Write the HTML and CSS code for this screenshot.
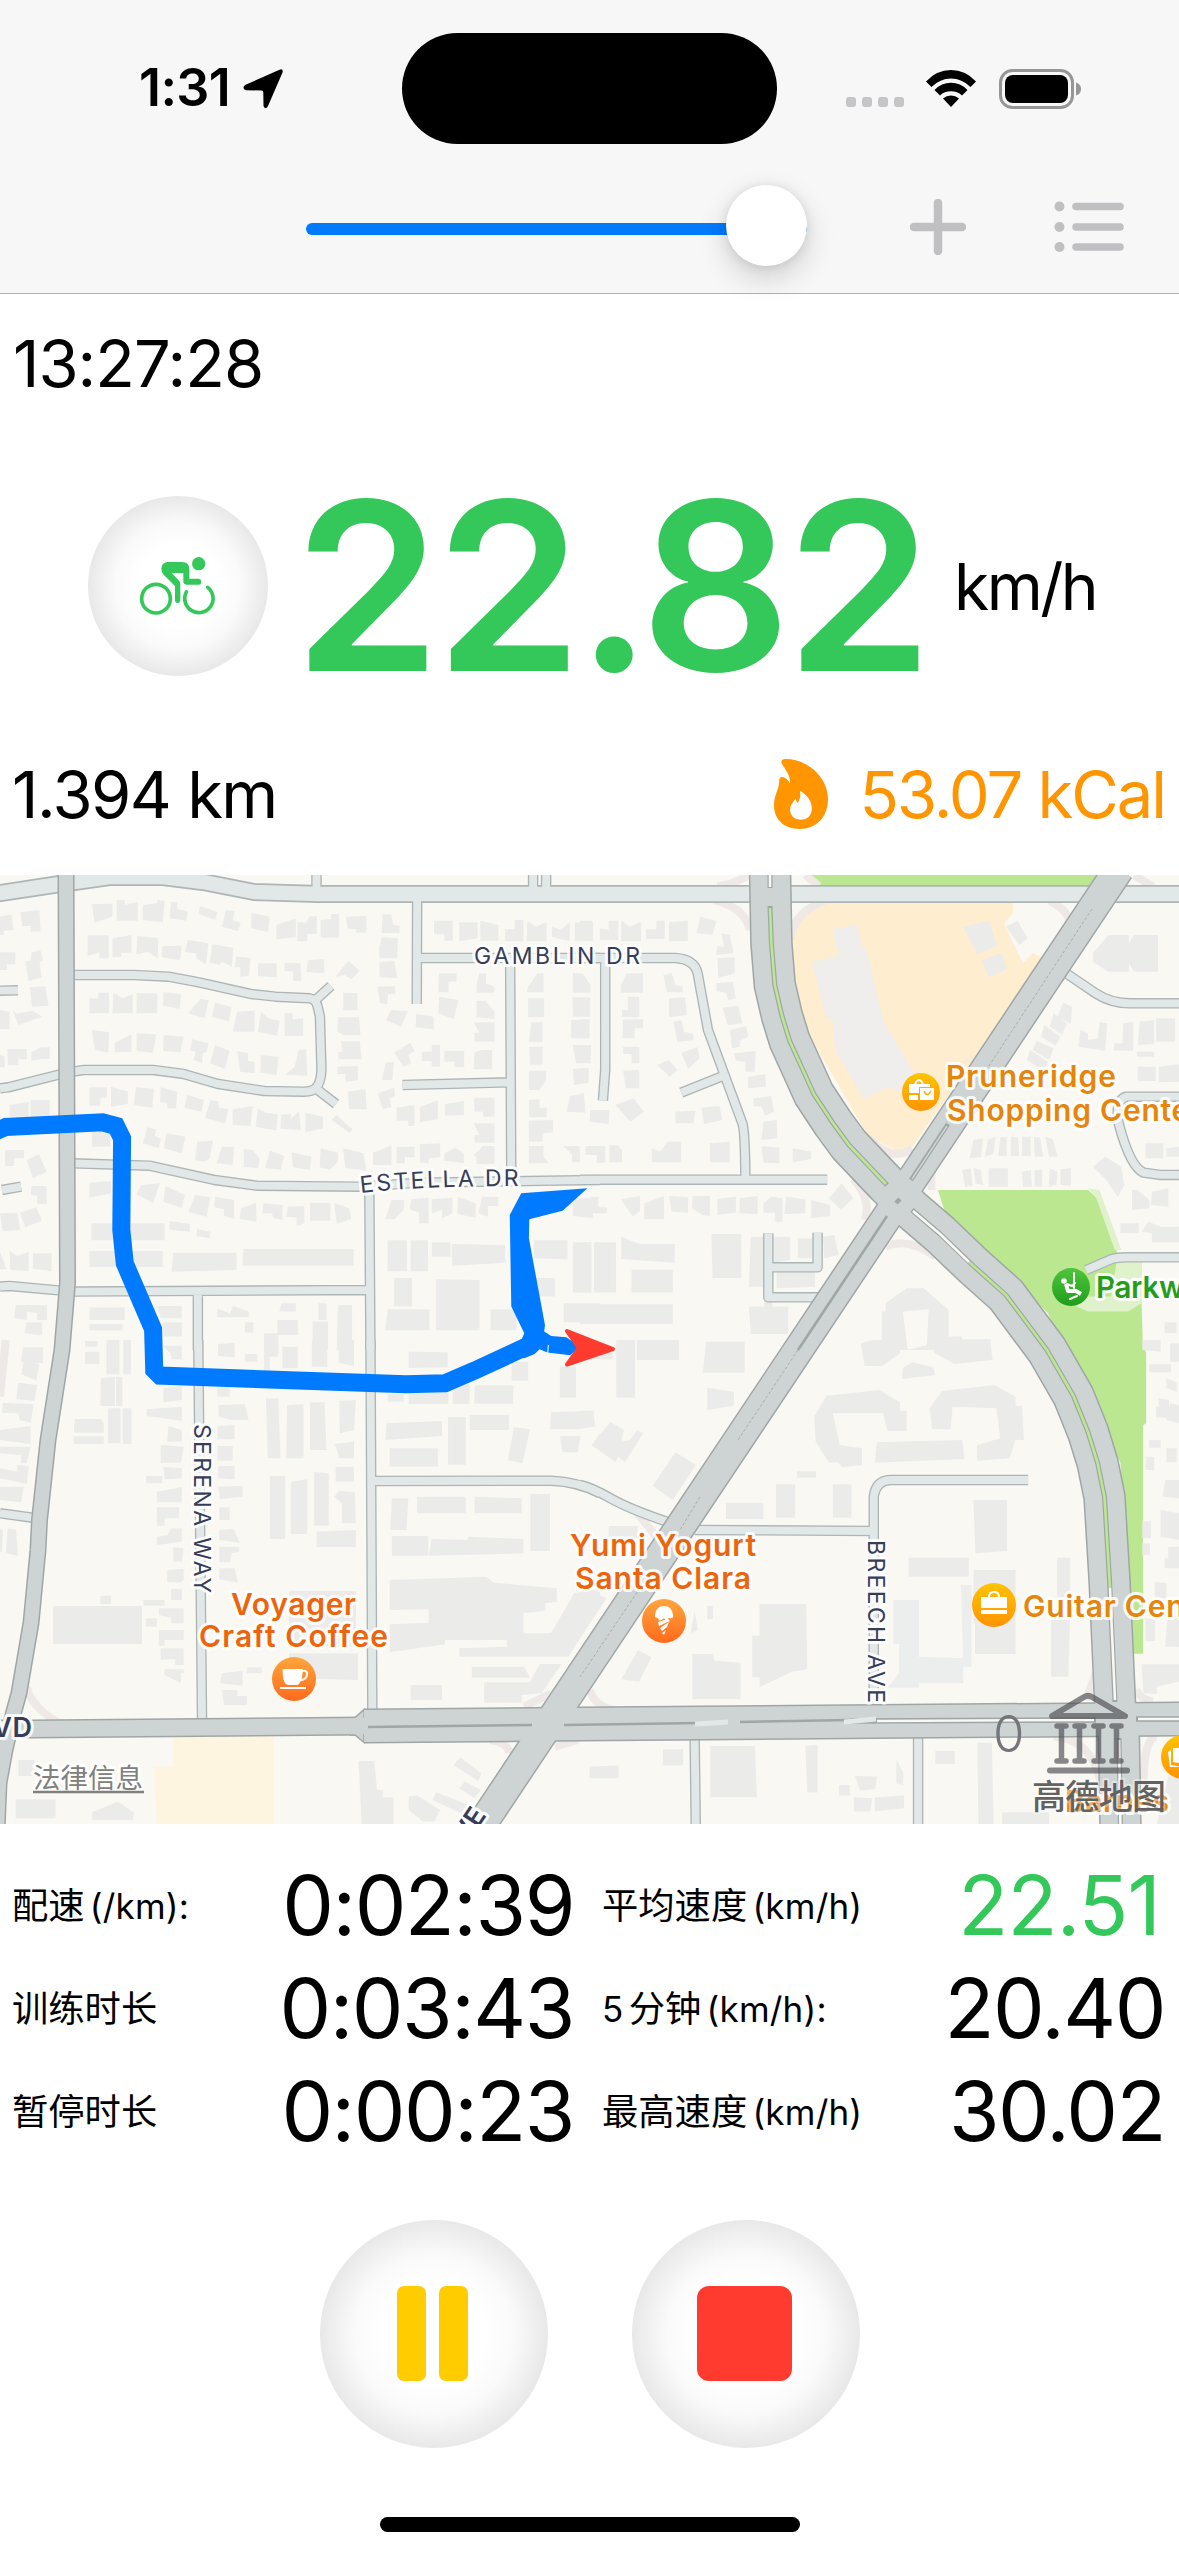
FILE: index.html
```html
<!DOCTYPE html>
<html lang="zh-CN">
<head>
<meta charset="utf-8">
<title>骑行</title>
<link rel="stylesheet" href="styles.css">
</head>
<body>
<header class="top">
  <div class="status">
    <div class="clock"><span class="clock-text">1:31</span>
      <svg class="loc" viewBox="0 0 40 40"><path d="M36.500 .8Q40.500 -.8 39.500 3.500L25 37Q22.500 41.500 20.500 37L20.300 23.500Q20.300 21.500 18.500 21.500L3 21.200Q-1.500 19.500 2 16Z"/></svg>
    </div>
    <div class="island"></div>
    <div class="indicators">
      <div class="dots"><i></i><i></i><i></i><i></i></div>
      <svg class="wifi" viewBox="0 0 50 38"><path d="M0 11.500Q10.500 0 25 0T50 11.500L44.500 17Q36 8.500 25 8.500T5.500 17ZM8.500 20Q15.500 12.800 25 12.800T41.500 20L36 25.500Q31.500 21.300 25 21.300T14 25.500ZM17 28.500Q20.500 25.500 25 25.500T33 28.500L25 37Z"/></svg>
      <svg class="battery" viewBox="0 0 83 40"><rect x="1.500" y="1.500" width="72" height="37" rx="12" fill="none" stroke="#969696" stroke-width="3"/><rect x="6" y="6" width="63" height="28" rx="8"/><path d="M77 13.500Q82 15 82 20T77 26.500Z" fill="#969696"/></svg>
    </div>
  </div>
  <nav class="nav">
    <div class="slider"><div class="knob"></div></div>
    <svg class="plus" viewBox="0 0 56 56"><path d="M28 4V52M4 28H52" stroke="#c0c0c2" stroke-width="8.500" stroke-linecap="round"/></svg>
    <svg class="list" viewBox="0 0 70 52"><g fill="#c0c0c2"><circle cx="5.500" cy="5.500" r="5"/><circle cx="5.500" cy="26" r="5"/><circle cx="5.500" cy="46" r="5"/></g><path d="M22 5.500H66M22 26H66M22 46H66" stroke="#c0c0c2" stroke-width="7.500" stroke-linecap="round"/></svg>
  </nav>
</header>
<main>
  <div class="start-time"><span>13:27:28</span></div>
  <section class="speed">
    <div class="sport">
      <svg viewBox="24 18 540 540" fill="none" stroke="#34c759" stroke-width="11" stroke-linecap="round"><circle cx="228" cy="326" r="43"/><path d="M319 306A42.500 42.500 0 1 0 383 292"/><path d="M262 216H306Q328 216 328 238V266H357Q364 267 364 275T357 284H320Q310 284 310 274V249H275L296 271Q301 276 301 284V330Q301 339 293 339T285 330V288L251 254Q244 246 244 236Q245 218 262 216Z" fill="#34c759" stroke="none"/><circle cx="356" cy="221" r="20" fill="#34c759" stroke="none"/></svg>
    </div>
    <span class="speed-value">22.82</span>
    <span class="speed-unit">km/h</span>
  </section>
  <section class="totals">
    <span class="distance">1.394 km</span>
    <div class="energy">
      <svg class="flame" viewBox="44 23 164 212"><path fill="#ff9500" fill-rule="evenodd" d="M69 39Q61 24 79 23C146 23 208 78 208 144C208 198 173 235 122 235C75 235 44 206 44 163C44 128 60 117 60 87Q60 77 69 77C79 78 89 88 92 97C95 77 82 60 69 39ZM123 120C126 143 119 147 117 157Q111 151 109 143C105 153 93 160 93 176C93 195 106 207 126 207C145 207 159 194 159 173C159 151 143 129 123 120Z"/></svg>
      <span>53.07 kCal</span>
    </div>
  </section>

  <svg class="map" viewBox="0 875 1179 949">
    <defs>
      <linearGradient id="food" x2="0" y2="1"><stop stop-color="#ffa63c"/><stop offset="1" stop-color="#ff6a1c"/></linearGradient>
      <linearGradient id="shop" x2="0" y2="1"><stop stop-color="#ffc400"/><stop offset="1" stop-color="#ff9300"/></linearGradient>
      <linearGradient id="park" x2="0" y2="1"><stop stop-color="#4fc53c"/><stop offset="1" stop-color="#1f9e1b"/></linearGradient>
      <path id="estella" d="M361 1193Q420 1186 520 1186"/>
      <g id="streets">
        <g class="nw">
          <path d="M193 315H350L440 320 520 337 655 372 720 380 810 385Q826 388 830 410L836 440 840 600Q838 640 825 655 815 665 795 665L690 663 570 642 480 612 400 600H220L190 605M825 390L865 348M825 655L878 702M0 655L22 652 160 612M190 880L390 887 560 930 670 947 940 950 1100 938 1568 930M0 1250L25 1248 160 1262M195 1265L968 1260M1090 90L1089 402M1095 264H1568M1333 264L1336 930M1052 645L1333 637M827 10V52M1393 10V52M1427 10V52M0 362L47 361M5 960L55 950M965 950L968 1440M517 1265V1440"/>
        </g>
        <g class="ne">
          <path d="M0 264H250Q300 268 308 310L335 480 425 760Q432 780 433 928M370 620L265 668M66 264V600L60 692M0 929H647M1260 300L1350 370Q1390 400 1440 400H1568M1568 680H1430Q1400 690 1410 760 1440 890 1475 908L1520 915H1568M1325 1200L1390 1168Q1405 1162 1430 1162H1568M493 1090V1282H640M493 1192H622V1088"/>
        </g>
        <g class="sw"><path d="M968 0L973 1130M518 0L528 1150M0 520L90 534M975 423L1440 422Q1510 425 1568 460"/></g>
        <g class="se"><path d="M0 435Q30 442 80 475T240 550M300 570L768 573M769 1110V470Q775 420 815 420H1173M300 1180L303 1455M885 1180V1455"/></g>
      </g>
      <path id="north" d="M-5 894L0 893 60 884 109 877H163L203 882 254 892 318 894H1184"/>
      <g id="west"><path d="M66 870L67.500 1283 62 1350 48 1440 39.500 1520 38 1550 31 1623 19 1693 13.500 1713 5 1750-1 1783-3 1830"/></g>
      <g id="blvd-west"><path d="M-5 1729H31L365 1726"/></g>
      <g id="blvd"><path d="M364 1726L580 1724 1184 1719"/></g>
      <g id="parkway"><path d="M770 870L771.400 943 774.800 985 782 1016 789.700 1041 801.600 1067 813.800 1094 832.900 1123 849 1145 887 1185 912 1210 940 1234 973.500 1266 1006 1295 1047 1350 1073.500 1396 1088 1432 1097.600 1463 1104.500 1497 1109.500 1580 1115 1702 1119 1740 1120.500 1830"/></g>
      <g id="diagonal"><path d="M1119 869L895 1205 580 1677 478 1830"/></g>
    </defs>
    <rect y="875" width="1179" height="949" fill="#f9f8f3"/>

    <g class="ne">
      <path fill="#feedcf" d="M640 90H1133V130L1110 160 1130 210 1160 280 1185 250 1215 265 870 830 830 842 755 800 603 500 545 300 555 190 580 140Z"/>
      <path fill="#bbe790" d="M595 10H1360L1335 50H625ZM937 960H1330L1360 990 1405 1140V1175H1470V1300L1474 1440V1460H1270L1225 1330 955 1025Z"/>
      <path fill="#dff2cc" d="M1330 955L1360 960 1417 1140H1400L1350 980ZM1405 1175H1470V1300L1435 1325H1330L1300 1310V1280H1390Z"/>
      <path fill="#efeeec" d="M662 178L725 165 740 235 750 240 795 455 870 600 920 650 880 690 810 650 743 687 668 540 660 445H645L607 275 677 258Z"/>
      <path class="verge" d="M350 90Q430 110 445 180M360 50Q410 40 440 15M550 210Q555 130 640 92M590 15L625 48M1230 92Q1275 120 1280 150M1450 15L1500 50M715 925Q765 990 745 1050M755 805Q820 880 870 835M920 900V960M800 1130Q860 1100 930 1160M493 1290V1390"/>
    </g>
    <g class="se">
      <path fill="#bbe790" d="M1270 0H1474L1482 40V250L1474 256V941H1440L1415 370Z"/>
      <path class="verge" d="M150 520L200 590M25 1050Q40 1100 90 1110M1350 1000L1325 1080M1455 1050Q1470 1080 1500 1085M1240 1190Q1350 1200 1365 1350M1510 1190Q1475 1190 1475 1340"/>
      <path fill="#ebeeed" d="M820 780H887V950L1003 955 997 735H1025V980H1003V1030H887V1043H805L835 1000V912H820Z"/>
    </g>
    <g class="sw">
      <path fill="#fdf5df" d="M452 1185H715V1460H410L403 1280H452Z"/>
      <path class="verge" d="M70 1040Q80 1100 155 1150M1370 1100L1440 1060M1280 1200Q1330 1210 1330 1240M1450 1220L1510 1200M15 0L0 170"/>
    </g>

    <g class="buildings">
      <g class="nw"><path d="M240 103L294 101V140L247 158ZM305 90H326V105L360 95V152H305ZM374 105L410 100 412 90 430 92 426 157 372 150ZM447 96L463 97V118L490 124 487 152 443 145ZM523 108L568 126 562 150 518 131ZM590 120L613 123 608 150 629 158 622 184 580 170ZM657 128L705 140 700 187 656 174ZM722 165L773 145V202L722 208ZM777 155L800 158 808 140 828 138V192H803V214H777ZM838 150L865 148V132H886V203H838ZM904 140L957 138V188H930V178L908 175ZM1000 133H1022L1028 165 1044 167V189H997ZM53 127L103 120 106 184 80 185V168H58ZM0 140L30 133 35 180 10 182V195H0ZM229 196H284V265H260V247L229 258ZM294 205L344 195V247L317 250V261H294ZM359 198L414 204 412 265 388 246 356 253ZM425 228L475 227 470 270 422 262ZM491 210L545 220 538 283 513 265V250L482 247ZM555 223L610 233 606 290 580 276 573 284 548 278ZM617 260L655 264 650 318 628 320V292H613ZM674 280H723V322L674 318ZM744 278L785 280 788 333H766V305L743 302ZM806 270L847 267V310L800 306ZM910 272L940 303 918 328 900 315 877 320ZM990 235L998 202 1040 205 1038 265H992ZM992 276L1030 273 1038 325 992 322ZM0 247H40V283H18V300H0ZM66 275L80 272 82 248 105 240 112 270 103 275 109 322 75 333ZM78 352L118 349 127 407 84 410ZM0 420L25 425V477H0ZM33 420L43 431 85 422 110 440 48 465ZM0 555L12 560V592H0ZM20 537H70V568H48V586H20ZM82 547L107 532H130V567H105L82 573ZM234 385H257V368H285V430H234ZM296 368L320 385 347 372V430H294ZM357 370H411V430H357ZM428 366L473 373 470 416 426 407ZM510 405L525 386 545 391 535 445 492 430ZM562 398L605 412 598 454 553 440ZM620 425L665 422V485H608ZM682 425L702 445 731 453 724 497 674 485ZM744 430H765V448L792 445V498H744ZM897 368L934 370V421H897ZM986 350L1033 348V373H1014L1012 403 993 400ZM1022 420L1066 423 1048 470 1008 450ZM1088 432L1133 440V478L1086 472ZM883 442H938L942 496H900L882 485ZM890 514H940L945 568H884V545H895ZM240 480L285 487 283 548 248 540ZM300 518L344 493V545L300 547ZM357 490L408 493 400 548 357 543ZM428 495L480 500 472 547 426 543ZM502 508L545 520 540 545 530 550 528 579 506 570 511 544 497 542ZM562 525L600 543 588 597 549 580ZM620 543L648 550V572L665 575V610L628 605ZM682 556L727 560 723 615 680 608ZM780 540L800 538 803 617 745 614 770 590ZM882 590L935 588V630L903 636V612H882ZM1008 578L1029 575 1025 630H998ZM1030 548L1072 518 1083 543 1067 555 1075 580 1055 590ZM1102 545H1128V524H1150V590H1128V573H1102ZM1161 542H1213V592H1188V575H1161ZM234 652H279V683H262V707H234ZM290 650L310 658 334 664V702L290 710ZM355 652L402 656 398 713 350 706ZM420 652L463 665 460 715H437V700L418 695ZM490 675L533 690 526 725 482 713ZM550 690L570 694 572 713 597 718 588 760 536 743ZM608 718L660 708 655 768 608 765ZM674 715L695 728 726 733 722 782 668 770ZM735 733H760V747L782 722 786 780 733 776ZM798 728L844 740V775L798 787ZM880 735L910 768 922 777 912 788 885 765 866 750ZM909 665L955 657 958 718H912ZM987 670L1030 653 1032 677 1018 685 1022 712 1000 717ZM1036 713L1083 705V768H1067V752H1036ZM1097 712L1144 690V748L1097 757ZM1163 703L1212 692V735L1163 737ZM1238 683H1292V740H1262V725H1240ZM1238 760H1292V818H1240V795H1252ZM1238 855L1262 828H1292V882H1245V862ZM25 705L75 695V740H25ZM80 690H130V740H80ZM240 780H288V830H240ZM385 772L408 778 405 798 420 806 415 835 373 820ZM435 790L485 800 474 850 428 835ZM515 815L557 812 548 865 535 875 510 870ZM580 830L612 830 608 885 566 880ZM637 838L660 840 678 865 675 895 637 890ZM705 842L743 857 733 900 693 893ZM762 847L814 860 810 900 765 892ZM838 835L883 848V875L862 900 835 892ZM897 835L950 850 957 902 902 893ZM975 848L1023 826V885H975ZM1036 830H1083V862H1058V880H1036ZM1097 823L1150 820V862L1120 865V880L1097 877ZM1161 850L1190 833 1212 850V880L1161 872ZM13 840H63V865H37V888H13ZM70 870L102 853 122 905 86 925ZM82 948H122V1002H97V978L80 975ZM0 1030L45 1028 53 1080 7 1084ZM52 1028L95 1012 110 1052 66 1072ZM234 938L290 933V970L234 983ZM370 945L418 940 400 1000 356 972ZM432 948L483 975 475 1013 427 995ZM510 975L550 982 540 1040 492 1025ZM562 980L612 990V1047L585 1037V1018L560 1012ZM630 1015L670 998V1055L626 1047ZM688 1000L738 1005V1050L715 1045 710 1030H686ZM752 1010L795 1008V1060L775 1068V1043L748 1040ZM810 998H863V1052H810ZM873 998L912 1015 918 1047 880 1062ZM239 1060H430V1111H239ZM443 1053L496 1062V1085L443 1079ZM515 1078L550 1085 547 1105 513 1098ZM234 1143H425V1191H234ZM453 1148H618V1200L448 1205ZM636 1137H924V1187H634ZM0 1145L17 1198H0ZM25 1143L45 1158 75 1146V1203L27 1200ZM86 1150H135V1203L86 1196ZM1134 152H1183V212H1161V193H1134ZM1200 157H1248V205L1200 214ZM1255 152L1302 165V212H1255ZM1320 178H1345V150H1368V214H1320ZM1378 152L1400 170 1428 157V214H1376ZM1442 168L1465 180 1490 155 1488 214 1442 200ZM1502 157H1550V212H1502ZM1147 310H1193V335H1172V367H1145ZM1245 345L1252 310H1270V340L1292 350V368H1245ZM1148 380L1198 390 1185 447 1145 430ZM1245 392H1268L1292 425V447L1245 442ZM1238 457H1292V515H1240V488H1252ZM1240 547L1260 540H1286V598H1238ZM1380 350L1405 310H1420V367H1377ZM1497 310H1522L1543 345V368H1497ZM1380 385H1422V442H1380ZM1496 382H1542V440H1498ZM1388 457H1418V516H1382ZM1492 450H1538V505H1492ZM1383 530H1418V584H1385ZM1497 525H1544V550L1520 580H1505ZM1382 602H1427V630L1410 660H1382ZM1497 597L1538 593V638L1500 645ZM1383 690L1410 688V715L1428 712V742H1383ZM1490 678L1526 670 1530 728 1480 725ZM1382 752L1445 750V787L1418 790V815H1382ZM1382 828H1420V860L1435 880H1382ZM1470 828H1515V877H1495V852ZM1023 990H1055V1020L1030 1048H1007ZM1075 987L1120 983V1060H1095V1028L1070 1018ZM1128 987L1182 983V1030L1155 1045V1020L1128 1030ZM1197 980L1243 1000V1043L1195 1032ZM1260 980H1302V1008H1275V1040L1250 1030ZM1497 985H1550V1045L1497 1038ZM1013 1111H1063V1204H1013ZM1073 1111H1118V1204H1073ZM1128 1117H1177V1160H1128ZM1180 1122L1320 1125V1178L1182 1187ZM1395 1111H1483V1168L1395 1165ZM1497 1117H1543V1268H1497ZM1552 1117H1568V1268H1552ZM1030 1224H1077V1310H1030ZM1140 1228L1253 1230V1381H1140ZM1013 1318H1122V1381H1007ZM1282 1318H1350V1381H1282ZM1395 1224H1450V1280H1395ZM1473 1300H1568V1357H1473ZM41 1305H123V1350H97V1330L70 1325V1350L37 1345ZM70 1357H110V1397L64 1390ZM234 1313H326V1350H234ZM234 1362H320V1382H234ZM410 1308H475V1345H420ZM425 1357H475V1400H425ZM568 1315L600 1330 610 1308 650 1325V1342H568ZM735 1300H773V1325H730ZM832 1300H853V1350H832ZM883 1305H920V1440H880ZM725 1350H778V1395H725ZM690 1390H727V1440H690ZM817 1355H857V1440H817ZM640 1357H662V1388H640Z"/></g>
      <g class="ne"><path d="M0 152H33V212H0ZM52 175L75 180V152H100V210H52ZM108 152L130 170 160 155V214H108ZM173 178H200V152H222V207H173ZM233 157L282 152V214H233ZM315 140L357 153 347 194 305 190ZM370 190L392 195 402 250 356 255 360 228 378 230ZM360 265L405 262V310L362 325ZM357 340L400 335 408 385 388 390 382 368 357 363ZM218 315L240 310 250 345 270 350 268 367H228ZM122 310H165V368H107V345ZM125 380H155V442H110V420H125ZM233 385L275 382 280 435 233 442V418ZM112 448H165V475H143V505H112ZM245 455L265 450 273 485 297 492V510L255 517ZM373 413L415 407 425 460 387 466ZM0 448H25V505H0ZM0 525H28V580H0ZM113 530H155V580H135V552H113ZM393 480L435 468 440 500 418 513V530L398 535ZM265 548L308 532 313 565 283 597ZM403 550L460 543 457 605H433V575L408 572ZM202 585L232 570 255 600 235 620ZM113 602L155 600V655H120ZM440 620L485 612 487 650 440 655ZM453 685L500 678 508 725 485 737 475 710 455 708ZM93 705L140 685 167 725 132 755ZM27 720H77L75 762 25 755ZM250 725L302 722 297 760H250ZM318 713L365 708 372 750 325 762ZM480 755L515 750 517 805 475 810ZM0 595H22V620L0 640ZM14 828H66V878H44V855H14ZM77 825H98L110 840V877H77ZM188 835L210 845 230 815H265V877H188ZM475 828L522 833V880L480 878ZM340 820L392 815V877H340ZM557 835L605 845V867L557 877ZM685 940L715 985 683 1020 652 985ZM28 980H48V1012H70V1030H28ZM107 988L157 978V1022L138 1040ZM168 1000L220 978V1048H168ZM233 978L283 982V1028L240 1025ZM295 978H340V1038L320 1035 293 1015ZM360 987L408 980V1028L360 1035ZM418 985L465 978V1033L418 1030ZM480 1000L500 980 530 985V1057L510 1055V1028H480ZM540 980L590 988V1030L535 1033ZM605 990L655 1005V1038L605 1045ZM0 1117H30V1268H0ZM41 1117H94V1268H41ZM108 1100L155 1122H248V1178L108 1167ZM135 1199H243V1268H135ZM0 1303H243V1362H0ZM344 1092H422V1224H347ZM447 1100H550V1170L500 1180 480 1250H442ZM570 1105H610V1165H570ZM635 1100L665 1095 677 1155 640 1165ZM515 1205H615V1250L515 1255ZM442 1310H545V1392H447ZM1003 170L1070 152 1093 228 1040 252ZM1052 270L1105 250 1117 298 1070 322ZM1115 170L1145 152 1172 205 1150 225ZM1343 250L1383 195H1437V220L1450 195H1513V305H1450L1437 280V305H1383L1343 275ZM1330 490L1310 480 1305 530 1375 542 1380 460 1360 457 1355 505 1330 510ZM1422 460L1448 455V542H1398V520H1420ZM1465 455L1503 450V522L1460 525ZM1508 445H1558V515H1508ZM1458 545H1503V560H1458ZM1460 590H1507V633H1460ZM1515 590L1568 583V635L1515 637ZM1265 398L1288 410 1285 462 1250 440ZM1240 430L1275 460 1262 495 1230 470ZM1215 465L1258 500 1245 527 1208 500ZM1195 512L1240 535 1228 570 1185 540ZM1178 540L1225 575 1212 600 1170 570ZM1030 810L1055 805 1050 862 1020 865ZM1068 808L1088 800 1082 852 1060 860ZM1100 802H1117V858H1095ZM1128 800L1147 803 1150 858H1128ZM1157 800H1180V858H1157ZM1188 800L1205 803 1212 860H1190ZM1218 800L1238 808 1250 860H1228ZM1000 900L1023 895 1028 948 1008 950ZM1030 893L1050 900 1055 945 1035 940ZM1070 895H1120V950H1070ZM1157 905L1180 900 1183 950H1160ZM1190 900H1210V950H1190ZM1230 895L1250 905 1247 945 1227 950ZM1258 898L1285 895V948L1258 945ZM1480 820H1527V865H1480ZM1535 835L1568 830V860H1535ZM1343 890L1375 860 1417 890 1425 945 1408 982 1378 930ZM1445 960H1460L1490 990V1015L1445 1020ZM1497 965L1540 955V1010L1495 1005ZM1415 1060H1463V1090H1415ZM1470 1085L1488 1055 1520 1070H1568V1117H1497V1090ZM800 1300L855 1255H900L965 1320V1400H1000V1408H1075V1440H735L790 1410V1325H800ZM1530 1357H1562V1390H1530Z"/><path fill="#f9f8f3" d="M845 1325L913 1318 908 1425 858 1440Z"/></g>
      <g class="sw"><path d="M60 22H112V70L55 65ZM62 65L102 72 95 122 55 102ZM47 128L97 135 90 183 43 178ZM7 188L88 193 80 248 52 240 47 220 5 218ZM0 270L80 258V312L0 300ZM0 320L80 320 70 370 55 368V345L0 340ZM0 385L45 395V375L75 378 70 432 0 415ZM0 440L62 440 55 487 0 480ZM0 567L8 570 5 635H0ZM20 565L42 570 47 647 15 640ZM222 35H260V72H222ZM222 3H255V20H222ZM278 0H312V103H278ZM322 0H342V103H322ZM263 115L300 110V198H262ZM303 110H320V198H303ZM282 205H315V310H282ZM321 205H344V312H321ZM195 237H265L271 252V278H193ZM193 289H271V312H193ZM427 17H475V58H447V43ZM427 145L475 138V180L427 187ZM383 208L475 200V242L383 228ZM440 258L475 270V305H437ZM420 315L480 320 473 368H420ZM427 380L475 385V415L430 418ZM382 408H424V430H382ZM410 455L447 448 475 440V487H410ZM410 502H468V535H430V557H410ZM410 590L437 585 447 565H475V605L410 615ZM453 622L480 625 475 665H453ZM437 690L480 687V720L473 727H437ZM447 747H475V780H447ZM415 805H480V850H447V833L415 825ZM415 870H480V900H430V918H415ZM420 925H480V975H458V957L420 960ZM430 988H480V1000H473V1030L430 1005ZM375 780H430V797H375ZM382 835H410V860H382ZM262 767H290V792H262ZM139 798H371V912H139ZM570 12L613 8V52L570 48ZM640 42H672V65H640ZM690 0H727V50H705V93H690ZM738 20H778V85H738ZM815 0H855V80H815ZM885 0H925V78L885 68ZM570 195L640 193 650 240H605L572 230ZM568 258L613 255V298H568ZM568 318H608V362H568ZM570 378H613V418L570 415ZM570 440L634 437V470L575 477ZM573 502H600V540H573ZM573 570L610 567 627 608 573 600ZM573 620H625V635L605 640 600 667H573ZM573 685H613L622 728 573 718ZM645 982H684V1000H645ZM580 1000L634 992V1037L575 1030ZM580 1050H620V1068H645V1095H585ZM695 175H727L733 355H700ZM750 195L793 192V355H748ZM810 187H848L853 330H810ZM887 182L930 180 925 270 888 280ZM875 312L925 305V355H887ZM877 380H925V425H877ZM873 470L887 452 927 457 930 550H893V490ZM705 408H745V597H705ZM760 425L803 418V582H760ZM821 396L859 400V557H821ZM827 575L930 570V621H827ZM755 753H930V920H755ZM755 940H935V1020L755 1015ZM568 140H600V170H568ZM1068 35L1170 37V82L1068 84ZM1013 163H1055V185H1013ZM1068 158H1172V192H1068ZM1183 120H1227V192H1183ZM1241 136H1341V191H1239ZM1337 65H1380V122H1337ZM1463 80H1505V173H1463ZM1171 231H1217V374H1171ZM1227 225H1330V270H1227ZM1010 250L1155 243V288L1007 300ZM1018 325H1144V380H1018ZM1343 262L1385 268 1365 370 1327 360ZM1440 217L1550 212V260L1510 268H1437ZM1463 288H1517L1510 337H1470ZM1550 310L1568 280V325ZM1024 475L1067 475 1062 570H1020ZM1090 470H1217V520H1090ZM1240 470L1363 475V520H1240ZM1386 462H1437V633H1386ZM1024 588H1119V647H1024ZM1128 597L1220 600 1225 590 1368 597V640L1120 647ZM1018 720L1270 710 1290 728 1455 745V785L1425 790V812L1368 820V880H1440L1500 760 1568 745V800L1485 950H1200V925L1325 920V900H1163V913L1018 937V853L1120 848V808L1018 810ZM1233 980H1370L1385 1013H1233ZM1410 972H1468L1415 1060 1363 1065V1088H1265V1027H1385ZM1073 1035H1155V1080H1073ZM1185 1275L1203 1253 1258 1300 1250 1323ZM1200 1345L1215 1325 1257 1350 1240 1375ZM1068 1370L1090 1367 1150 1410 1135 1445H1105L1068 1410ZM1140 1357L1235 1400 1215 1425 1130 1380ZM937 1263H978L985 1350H1000V1372H1028V1452H945ZM48 1260H90V1308H48ZM41 1378H145V1435H41ZM240 1418L308 1385 350 1418 347 1440H240Z"/></g>
      <g class="se"><path d="M0 0L85 20V58H0ZM95 0H144V173H95ZM149 0H259V60H149ZM330 5H431V98H322ZM333 143L403 155V197L333 210ZM0 212H35L39 260H0ZM30 315L80 245 115 270 108 305 130 300 150 270 165 280 118 367 100 350 93 367ZM250 337L303 375 243 480 190 437ZM382 488H480V537H382ZM513 433H563V533H513ZM568 394H618V413H568ZM662 433H711V533H662ZM75 558H151V620H75ZM735 10L765 0H838V40L790 78H745ZM910 0L1075 12 1080 60 980 72 930 40ZM845 85L870 67 925 82 930 105 843 117ZM645 167L783 150 838 187V212H855V273H805L793 220H662L680 315 738 325V375L685 382 677 367 652 368 617 305 613 230ZM948 153L1085 135 1140 170V198H1157L1162 300H1140L1125 355 1040 362V315L1100 295 1090 205 975 200 970 268H922L915 205ZM777 307L1000 300 1007 357 772 368ZM1030 480H1118V633L1035 640ZM860 653H1018V710H860ZM1030 690H1140V942H1034V850H1030ZM1249 653H1283V830L1278 1010H1233V835H1249ZM470 792H592L595 988 555 995 470 1042V1012H451V887H470ZM294 942H347L352 962 420 968V1077H294ZM152 930L187 952 155 1025 108 1018ZM333 798H348V837H333ZM341 1218H458L463 1372H341ZM217 1228H270V1277H217ZM25 1280L101 1277V1315H25ZM590 1218L622 1214V1358H595ZM828 1258L847 1300 845 1335 828 1330ZM720 1308L777 1310 773 1348 733 1352ZM678 1335H706V1367H678ZM717 1372L765 1375 760 1415H717ZM772 1373L848 1367V1405L772 1414ZM930 1233H981V1272H930ZM1040 1208H1078L1083 1452H1043ZM1105 1417H1228V1452H1105ZM0 800L20 750 70 775 0 895ZM1470 973H1568V1025L1510 1040V1062L1475 1060ZM1472 0H1520V35L1472 30ZM1545 10H1568V65H1545ZM1490 73H1547V97H1490ZM1535 115L1562 127V155L1535 145ZM1515 175L1542 180V235L1508 232V200H1515ZM1545 190L1568 195V250L1535 240ZM1490 300H1520V323H1490ZM1482 350H1503V390H1480ZM1535 325H1562V367H1535ZM1532 420H1568V475L1525 470ZM1520 510L1568 520V600L1520 590ZM1472 543H1495V595H1472ZM1472 610H1492V645H1472ZM1540 620H1568V685H1530V655H1540ZM1505 725L1535 730V775H1505ZM1480 835L1505 838V903H1480ZM1540 790H1568V920H1532ZM300 812L308 870 290 880ZM1540 1310H1568V1452H1510Z"/></g>
    </g>

    <use href="#streets" class="street-case"/>
    <use href="#north" class="line" stroke="#adb6b6" stroke-width="18"/>
    <use href="#streets" class="street-fill"/>
    <use href="#north" class="line" stroke="#e2e8e8" stroke-width="14.500"/>
    <g class="line" stroke="#9fa6a6">
      <use href="#west" stroke-width="17"/>
      <use href="#blvd-west" stroke-width="19"/>
      <use href="#blvd" stroke-width="35"/>
      <use href="#diagonal" stroke-width="31.500"/>
      <use href="#parkway" stroke-width="42.500"/>
    </g>
    <path fill="#ced4d4" stroke="#9fa6a6" stroke-width="1.500" d="M350 1718.500H354L364 1709.500V1742.500L355 1735H350Z"/>
    <g class="line" stroke="#ced4d4">
      <use href="#west" stroke-width="14"/>
      <use href="#blvd-west" stroke-width="16"/>
      <use href="#blvd" stroke-width="32"/>
      <use href="#diagonal" stroke-width="28.500"/>
      <use href="#parkway" stroke-width="39.500"/>
    </g>
    <g class="line">
      <path stroke="#9fa6a6" stroke-width="5" d="M770 875V888M770 906L771.400 943 774.800 985 782 1016 789.700 1041 801.600 1067 813.800 1094 832.900 1123 849 1145 887 1185M912 1210L940 1234 973.500 1266 1006 1295 1047 1350 1073.500 1396 1088 1432 1097.600 1463 1104.500 1497 1109.500 1580 1115 1702M1119 1738L1120.500 1830"/>
      <path stroke="#bbe790" stroke-width="2.600" d="M770 908L771.400 943 774.800 985 782 1016 789.700 1041 801.600 1067 813.800 1094 832.900 1123 849 1145 886 1184M969 1262L1006 1295 1047 1350 1073.500 1396 1088 1432 1097.600 1463 1104.500 1497 1110 1588"/>
      <path stroke="#f9f8f3" stroke-width="2.600" d="M770 875V887M913 1211L940 1234 969 1262M1110 1588L1115 1700M1119 1740L1120.500 1830"/>
      <path stroke="#9fa6a6" stroke-width="4.500" d="M948 1124L911 1180M900 1199L896 1203"/>
      <path stroke="#9fa6a6" stroke-width="2.600" d="M887 1216L798 1350"/>
      <path stroke="#ced4d4" stroke-width="1.500" d="M947 1126L912 1179"/>
      <path stroke="#a7adad" stroke-width="1" stroke-dasharray="3 2" d="M1092 909L985 1072M798 1350L738 1440M700 1497L680 1530M640 1588L580 1677"/>
      <path stroke="#9fa6a6" stroke-width="2.500" d="M368 1727L532 1725M564 1725L700 1723M740 1722L850 1720"/>
      <path stroke="#9fa6a6" stroke-width="5.500" d="M850 1721L1096 1720M1136 1719H1179"/>
      <path stroke="#f9f8f3" stroke-width="2.500" d="M877 1721L1094 1720M1138 1719H1179"/>
      <path stroke="#e2e8e8" stroke-width="5" d="M695 1724L728 1722M844 1722L876 1719"/>
    </g>

    <g class="nw">
      <path fill="none" stroke="#007aff" stroke-width="18" vector-effect="non-scaling-stroke" d="M-20 788L15 771 268 757 303 768 319 805 317 1080 326 1180 400 1378 403 1500 418 1517 1060 1543 1163 1540 1240 1502 1385 1425"/>
      <path fill="#007aff" d="M1535 955L1362 970 1332 1035 1336 1310 1370 1390 1363 1408 1305 1440 1370 1465 1397 1452 1410 1438 1430 1448 1490 1456 1515 1430 1480 1402 1440 1398 1422 1385 1424 1365 1382 1105 1383 1048 1470 1022Z"/>
      <path stroke="#fff" stroke-width="1" vector-effect="non-scaling-stroke" d="M1433 1425L1431 1450"/>
    </g>
    <path fill="#ff3b30" stroke="#ff3b30" stroke-width="4" stroke-linejoin="round" d="M567 1331L613 1349 567 1364.500 579 1348Z"/>

    <g class="road-label">
      <text x="474" y="964" textLength="166">GAMBLIN DR</text>
      <text><textPath href="#estella" textLength="158">ESTELLA DR</textPath></text>
      <text transform="translate(194 1424)rotate(90)" textLength="169">SERENA WAY</text>
      <text transform="translate(868 1540)rotate(90)" textLength="163">BREECH AVE</text>
      <g class="strong"><text x="-40" y="1737" textLength="72">BLVD</text><text transform="translate(487 1815)rotate(-56.500)" text-anchor="end">AVE</text></g>
    </g>
    <g class="poi food">
      <text x="231" y="1615" textLength="125">Voyager</text><text x="199" y="1647" textLength="189">Craft Coffee</text>
      <text x="570" y="1556" textLength="186">Yumi Yogurt</text><text x="575" y="1589" textLength="176">Santa Clara</text>
    </g>
    <g class="poi shop">
      <text x="946" y="1087" textLength="170">Pruneridge</text><text x="947" y="1121" textLength="255">Shopping Center</text>
      <text x="1023" y="1617" textLength="204">Guitar Center</text><text x="1065" y="1812" textLength="104">Barnes</text>
    </g>
    <g class="poi green"><text x="1096" y="1298" textLength="121">Parkway</text></g>

    <g fill="#fff">
      <circle cx="294" cy="1679" r="22" fill="url(#food)"/><path d="M282.500 1669H303L302 1677Q300 1685 297 1685H288Q284 1684 283 1677ZM280 1687H306V1689H280Z"/><path d="M302 1671Q308 1670 307 1675T300 1680" fill="none" stroke="#fff" stroke-width="2"/>
      <circle cx="664" cy="1621" r="22" fill="url(#food)"/><path d="M655 1615Q656 1606 664 1606T673 1615Q674 1619 669 1618 666 1622 664 1618 659 1623 658 1618 654 1618 655 1615ZM658 1622L668 1619 670 1621 659 1626ZM660 1628L669 1622 667 1627 662 1631ZM662 1633L666 1630 664 1635Z"/>
      <circle cx="921" cy="1092" r="19" fill="url(#shop)"/><path d="M909 1084H930V1087H919V1093H909ZM909 1095H918V1100H909ZM920 1088H934V1100H920Z"/><path d="M915 1084Q919 1076 923 1084" fill="none" stroke="#fff" stroke-width="2"/><path d="M924 1091Q927 1098 931 1091" fill="none" stroke="#ffa800" stroke-width="1.500"/>
      <circle cx="994" cy="1605" r="22" fill="url(#shop)"/><path d="M981 1597H1007V1608H981ZM981 1610H1007V1614H981Z"/><path d="M989 1597Q989 1592 994 1592T999 1597" fill="none" stroke="#fff" stroke-width="2.200"/>
      <circle cx="1183" cy="1757" r="22" fill="url(#shop)"/><path d="M1168 1752L1171 1750V1765L1182 1767H1170ZM1173 1748H1184V1764L1173 1762Z"/>
      <circle cx="1071" cy="1287" r="19" fill="url(#park)"/><circle cx="1064" cy="1281" r="2.800"/><path d="M1066 1284L1068 1291H1076L1081 1294" fill="none" stroke="#fff" stroke-width="4" stroke-linejoin="round"/><path d="M1067 1284L1072 1286 1075 1283M1070 1299L1077 1296M1074 1273V1288" fill="none" stroke="#fff" stroke-width="2" stroke-linecap="round"/>
    </g>

    <text class="scale" x="993" y="1752">0</text>
    <g fill="none" stroke="#4a4a50" stroke-opacity=".65" stroke-linecap="round" stroke-linejoin="round">
      <path stroke-width="6" d="M1052 1716L1084 1697Q1088 1694.500 1092 1697L1125 1716Z"/>
      <path stroke-width="6" d="M1050 1770.500H1127"/>
      <path stroke-width="5.500" d="M1057 1726H1066M1057 1761H1066M1061.500 1726V1761M1075 1726H1084M1075 1761H1084M1079.500 1726V1761M1094 1726H1103M1094 1761H1103M1098.500 1726V1761M1112 1726H1121M1112 1761H1121M1116.500 1726V1761"/>
    </g>
    <text class="amap" x="1032" y="1809" textLength="134">高德地图</text>
    <text class="legal" x="33" y="1788" textLength="110">法律信息</text>
    <path d="M33 1792H144" stroke="#80807e" stroke-width="2.500"/>
  </svg>

  <section class="stats">
    <span class="label">配速 <b class="lat">(/km):</b></span><span class="value">0:02:39</span>
    <span class="label">平均速度 <b class="lat">(km/h)</b></span><span class="value average">22.51</span>
    <span class="label">训练时长</span><span class="value">0:03:43</span>
    <span class="label"><b class="lat">5</b> 分钟 <b class="lat">(km/h):</b></span><span class="value">20.40</span>
    <span class="label">暂停时长</span><span class="value">0:00:23</span>
    <span class="label">最高速度 <b class="lat">(km/h)</b></span><span class="value">30.02</span>
  </section>
  <section class="controls">
    <div class="control"><i class="bar"></i><i class="bar"></i></div>
    <div class="control"><i class="stop"></i></div>
  </section>
</main>
<div class="home"></div>
</body>
</html>
```
FILE: styles.css
```css
* { box-sizing: border-box; }
body {
  margin: 0;
  width: 1179px;
  height: 2556px;
  overflow: hidden;
  display: flex;
  flex-direction: column;
  background: #fff;
  color: #000;
  font-family: Inter, "Noto Sans CJK SC", sans-serif;
  font-feature-settings: "calt" 0;
}
svg { display: block; flex: none; }
span { white-space: nowrap; }

/* Status bar and navigation */
.top { height: 294px; background: #f7f7f7; border-bottom: 1px solid #b2b2b2; }
.status {
  height: 177px;
  display: grid;
  grid-template-columns: 402px 375px 402px;
  align-items: center;
}
.clock { display: flex; align-items: center; padding-left: 139px; gap: 13px; }
.clock-text { font-size: 52px; font-weight: 600; line-height: 60px; letter-spacing: -.6px; margin-top: -2px; }
.loc { width: 40px; height: 40px; }
.island { height: 111px; border-radius: 56px; background: #000; }
.indicators { display: flex; align-items: center; padding-left: 69px; }
.dots { display: flex; gap: 6px; width: 80px; margin-top: 27px; }
.dots i { width: 10px; height: 10px; border-radius: 3px; background: #c5c5c7; }
.wifi { width: 50px; height: 38px; }
.battery { width: 83px; height: 40px; margin-left: 23px; }
.nav { height: 100px; display: flex; align-items: center; padding: 0 55px 0 306px; }
.slider {
  width: 501px;
  height: 12px;
  margin-top: 4px;
  border-radius: 6px;
  display: flex;
  align-items: center;
  justify-content: flex-end;
  background: #007aff;
}
.knob {
  flex: none;
  width: 81px;
  height: 81px;
  margin-bottom: 7px;
  border-radius: 50%;
  background: #fff;
  box-shadow: 0 12px 30px rgba(0, 0, 0, .16), 0 1px 12px rgba(0, 0, 0, .1);
}
.plus { width: 56px; height: 56px; margin-left: 103px; }
.list { width: 70px; height: 52px; margin-left: auto; }

/* Current ride */
.start-time { height: 142px; display: flex; align-items: center; padding: 0 0 3px 13px; font-size: 65px; letter-spacing: -1px; }
.speed { height: 300px; display: flex; align-items: center; padding-left: 88px; }
.sport, .control {
  border-radius: 50%;
  background: radial-gradient(circle closest-side, #fff 45%, #fafafa 70%, #e8e8e8 100%);
}
.sport { width: 180px; height: 180px; flex: none; }
.speed-value { width: 655px; padding-left: 26px; font-size: 235px; font-weight: 600; line-height: 280px; letter-spacing: -5px; color: #34c759; }
.speed-unit { padding-left: 31px; font-size: 64px; letter-spacing: -2.500px; }
.totals {
  height: 117px;
  margin-bottom: 22px;
  padding: 0 14px 0 12px;
  display: flex;
  align-items: center;
  justify-content: space-between;
  font-size: 65px;
  letter-spacing: -1.500px;
}
.energy { display: flex; align-items: center; gap: 32px; color: #ff9500; letter-spacing: -2px; }
.flame { width: 54px; height: 70px; margin-top: -2px; }

/* Map; each quarter is drawn on its own survey grid */
.map { width: 1179px; height: 949px; }
.nw { transform: translate(0, 870px) scale(.3827, .3333); }
.ne { transform: translate(580px, 870px) scale(.382, .3333); }
.sw { transform: translate(0, 1340px) scale(.3827, .3333); }
.se { transform: translate(580px, 1340px) scale(.382, .3333); }
.buildings { fill: #ebebea; }
.verge { fill: none; stroke: #eee9e6; stroke-width: 8; vector-effect: non-scaling-stroke; }
.line { fill: none; stroke-linejoin: round; }
.street-case, .street-fill { fill: none; stroke-linejoin: round; }
.street-case { stroke: #adb6b6; stroke-width: 10.500px; }
.street-fill { stroke: #e2e8e8; stroke-width: 7.800px; }
#streets path { vector-effect: non-scaling-stroke; }
.map text { stroke: #fff; stroke-opacity: .9; stroke-linejoin: round; paint-order: stroke; stroke-width: 6px; }
.road-label { font-size: 23px; fill: #363d59; }
.strong { font-size: 27px; font-weight: 600; }
.poi { font-size: 30px; font-weight: 600; }
.food { fill: #ec650c; }
.shop { fill: #e5850c; }
.green { fill: #259c1d; }
.map .scale { font-size: 51px; font-weight: 300; fill: #76767a; stroke: none; }
.map .amap { font-size: 34px; font-weight: 500; fill: #626262; stroke-opacity: .4; stroke-width: 4px; }
.legal { font-size: 27.500px; fill: #80807e; }

/* Ride statistics */
.stats {
  padding: 30px 14px 0 12px;
  display: grid;
  grid-template-columns: 180px 382px 240px 1fr;
  grid-auto-rows: 103px;
  align-items: center;
}
.label { font-size: 36.300px; line-height: 50px; font-family: Inter, "Noto Sans CJK SC", sans-serif; word-spacing: -5px; }
.label:nth-child(4n + 3) { padding-left: 28px; }
.lat { font-size: 35px; font-weight: 400; letter-spacing: .2px; }
.value { font-size: 82px; line-height: 100px; text-align: right; letter-spacing: -1.500px; }
.average { color: #34c759; letter-spacing: -.8px; padding-right: 5px; }
.controls { margin-top: 57px; padding-left: 320px; display: flex; gap: 84px; }
.control { width: 228px; height: 228px; display: flex; align-items: center; justify-content: center; gap: 13px; padding: 0 3px 2px 0; }
.bar { width: 29px; height: 95px; border-radius: 7px; background: #fc0; }
.stop { width: 95px; height: 95px; border-radius: 12px; background: #ff3b30; }
.home { width: 420px; height: 15px; margin: 69px auto 0; border-radius: 8px; background: #000; }
```
